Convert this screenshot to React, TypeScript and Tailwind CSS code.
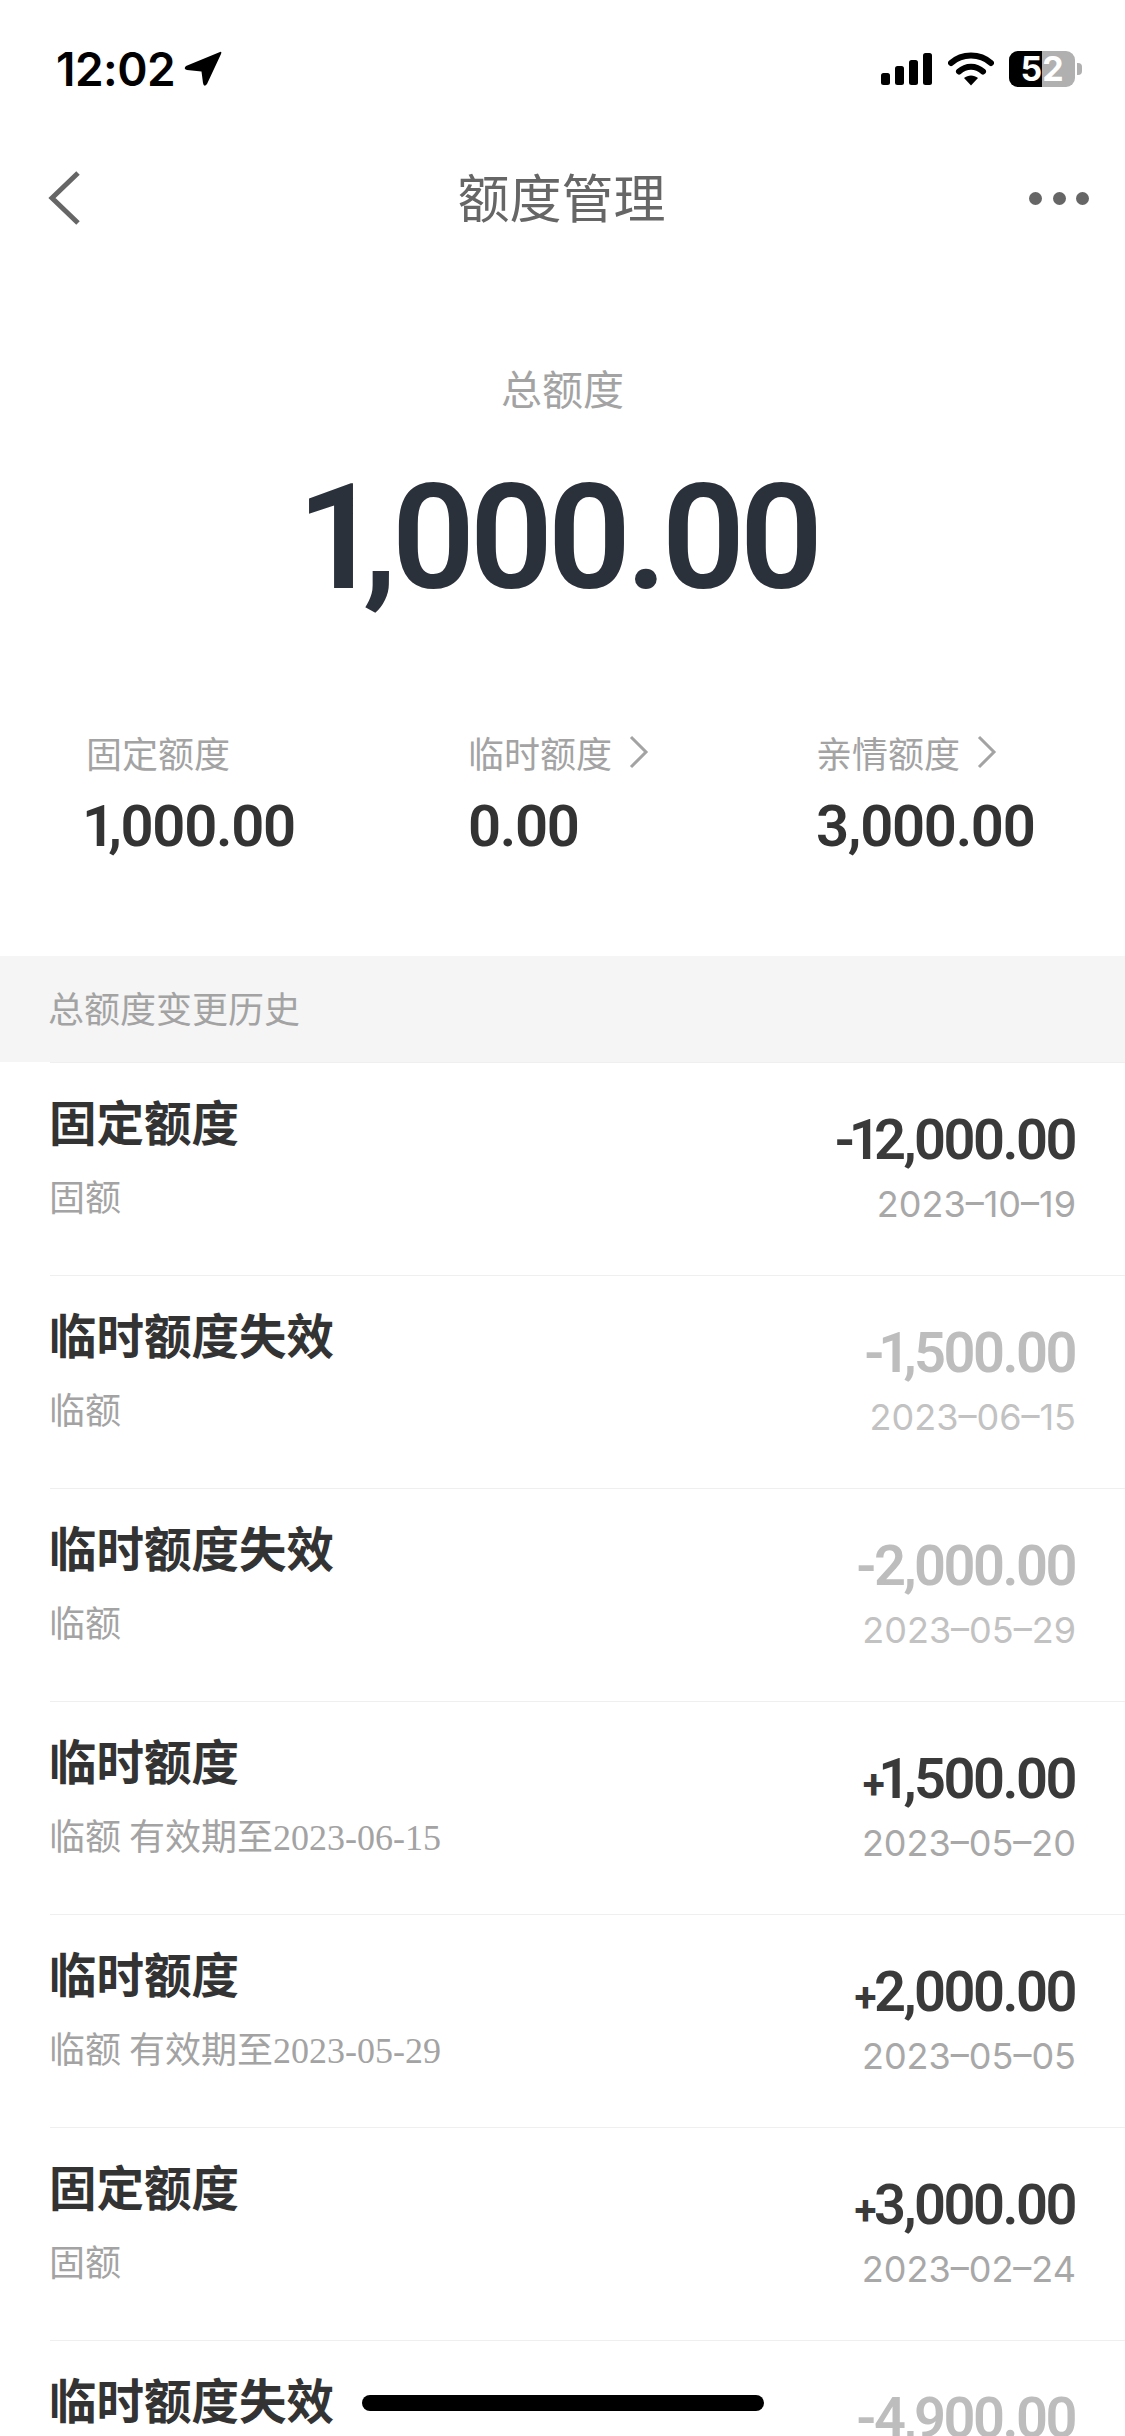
const cjk = "font-['Noto_Sans_CJK_SC','Noto_Sans',sans-serif]";

const history = [
  { title: "固定额度", sub: "固额", amount: "-12,000.00", date: "2023–10–19", faded: false },
  { title: "临时额度失效", sub: "临额", amount: "-1,500.00", date: "2023–06–15", faded: true },
  { title: "临时额度失效", sub: "临额", amount: "-2,000.00", date: "2023–05–29", faded: true },
  { title: "临时额度", sub: "临额 有效期至", until: "2023-06-15", amount: "+1,500.00", date: "2023–05–20", faded: false },
  { title: "临时额度", sub: "临额 有效期至", until: "2023-05-29", amount: "+2,000.00", date: "2023–05–05", faded: false },
  { title: "固定额度", sub: "固额", amount: "+3,000.00", date: "2023–02–24", faded: false },
  { title: "临时额度失效", sub: "临额", amount: "-4,900.00", date: "2023–01–31", faded: true },
];

// the app's number font has a narrow 1 and a small plus
function Amount({ text }: { text: string }) {
  return (
    <>
      {text.split(/([1+])/).map((part, i) => {
        if (part === "1") {
          return (
            <span key={i} className="-ml-[0.07em] tracking-[-0.12em]">
              1
            </span>
          );
        }
        if (part === "+") {
          return (
            <span key={i} className="text-[0.72em] font-bold">
              +
            </span>
          );
        }
        return part;
      })}
    </>
  );
}

function StatusIcons() {
  return (
    <div className="flex items-center">
      <svg width="52" height="34" viewBox="0 0 52 34" className="mr-[15px]">
        <rect x="0" y="21" width="9" height="12" rx="2.5" fill="#000" />
        <rect x="14" y="14" width="9" height="19" rx="2.5" fill="#000" />
        <rect x="28" y="8" width="9" height="25" rx="2.5" fill="#000" />
        <rect x="42" y="1" width="9" height="32" rx="2.5" fill="#000" />
      </svg>
      <svg width="46" height="34" viewBox="0 0 46 34" className="mr-[15px]">
        <path d="M3 11 C14 1 32 1 43 11" fill="none" stroke="#000" strokeWidth="6" strokeLinecap="round" />
        <path d="M11 19.5 C18 13 28 13 35 19.5" fill="none" stroke="#000" strokeWidth="6" strokeLinecap="round" />
        <path d="M16 26 C20 22.500 26 22.500 30 26 L23 33.500 Z" fill="#000" />
      </svg>
      <div className="relative flex h-[36px] w-[66px] overflow-hidden rounded-[9px] bg-[#b0b0b0]">
        <div className="h-full w-[33px] bg-black" />
        <span className="absolute inset-0 flex items-center justify-center font-['Inter',sans-serif] text-[34px] font-bold leading-none text-white">
          52
        </span>
      </div>
      <div className="ml-[2px] h-[12px] w-[5px] rounded-r-[4px] bg-[#b0b0b0]" />
    </div>
  );
}

function Stat({ label, value, arrow }: { label: string; value: string; arrow?: boolean }) {
  return (
    <div>
      <div className={`flex items-center h-[44px] text-[36px] leading-[44px] text-[#a3a3a3] ${cjk}`}>
        {label}
        {arrow && (
          <svg width="24" height="36" viewBox="0 0 24 36" className="ml-[15px]">
            <path d="M4 3 L19 18 L4 33" fill="none" stroke="#a3a3a3" strokeWidth="3" />
          </svg>
        )}
      </div>
      <div className="mt-[22px] h-[60px] font-['Roboto',sans-serif] text-[58px] font-semibold leading-[60px] tracking-[-1.3px] text-[#333333]">
        <Amount text={value} />
      </div>
    </div>
  );
}

function HistoryRow({ item }: { item: (typeof history)[number] }) {
  return (
    <div className="ml-[50px] flex h-[213px] justify-between border-t border-[#efefef] pr-[50px]">
      <div>
        <div className={`mt-[26px] h-[64px] -ml-[1px] text-[47.5px] font-semibold leading-[64px] text-[#333333] ${cjk}`}>
          {item.title}
        </div>
        <div className={`mt-[20px] h-[44px] -ml-[1px] text-[36px] leading-[44px] text-[#a3a3a3] ${cjk}`}>
          {item.sub}
          {item.until && <span className="font-['Liberation_Serif',serif]">{item.until}</span>}
        </div>
      </div>
      <div className="flex flex-col items-end">
        <div
          className={`mt-[47px] h-[60px] font-['Roboto',sans-serif] text-[56px] font-semibold leading-[60px] tracking-[-2.5px] ${
            item.faded ? "text-[#bdbdbd]" : "text-[#3a3a3a]"
          }`}
        >
          <Amount text={item.amount} />
        </div>
        <div
          className={`-mr-[1px] mt-[12px] h-[44px] font-['Inter',sans-serif] text-[36px] leading-[44px] ${
            item.faded ? "text-[#c2c2c2]" : "text-[#a8a8a8]"
          }`}
        >
          {item.date}
        </div>
      </div>
    </div>
  );
}

export default function App() {
  return (
    <div className="relative h-[2436px] w-[1125px] overflow-hidden bg-white">
      {/* status bar */}
      <div className="flex h-[132px] items-center justify-between pl-[56px] pr-[43px] pt-[6px]">
        <div className="flex items-center">
          <span className="font-['Inter',sans-serif] text-[46px] font-semibold leading-none tracking-[-0.5px] text-black">
            12:02
          </span>
          <svg width="38" height="36" viewBox="0 0 38 36" className="ml-[9px]">
            <path d="M36 1 Q38 0 37 3 L23 33 Q20 37 19 32 L17.500 20.500 L3 19 Q-1 18 2 15 Z" fill="#000" />
          </svg>
        </div>
        <StatusIcons />
      </div>

      {/* nav */}
      <div className="grid h-[132px] grid-cols-[1fr_auto_1fr] items-center pl-[48px] pr-[36px]">
        <svg width="32" height="54" viewBox="0 0 32 54">
          <path d="M30 2 L4 27 L30 52" fill="none" stroke="#666666" strokeWidth="5" />
        </svg>
        <span className={`-translate-x-[7px] -translate-y-[2px] text-[52px] leading-[52px] text-[#666666] ${cjk}`}>额度管理</span>
        <div className="flex w-[60px] justify-between justify-self-end">
          <span className="h-[13px] w-[13px] rounded-full bg-[#666666]" />
          <span className="h-[13px] w-[13px] rounded-full bg-[#666666]" />
          <span className="h-[13px] w-[13px] rounded-full bg-[#666666]" />
        </div>
      </div>

      {/* total */}
      <div className="flex flex-col items-center pt-[93px]">
        <div className={`h-[60px] text-[41px] leading-[60px] text-[#a3a3a3] ${cjk}`}>总额度</div>
        <div className="mt-[34px] h-[176px] font-['Roboto',sans-serif] text-[146px] font-semibold leading-[176px] tracking-[-5.4px] text-[#2a313b]">
          <Amount text="1,000.00" />
        </div>
      </div>

      {/* breakdown */}
      <div className="grid grid-cols-[382px_348px_1fr] pl-[86px] pt-[103px]">
        <Stat label="固定额度" value="1,000.00" />
        <Stat label="临时额度" value="0.00" arrow />
        <Stat label="亲情额度" value="3,000.00" arrow />
      </div>

      {/* history */}
      <div className={`mt-[100px] flex h-[106px] items-center bg-[#f5f5f5] pb-[4px] pl-[48px] text-[36px] text-[#a3a3a3] ${cjk}`}>
        总额度变更历史
      </div>
      {history.map((item, i) => (
        <HistoryRow key={i} item={item} />
      ))}

      {/* home indicator */}
      <div className="absolute left-[362px] top-[2395px] h-[16px] w-[402px] rounded-full bg-black" />
    </div>
  );
}
